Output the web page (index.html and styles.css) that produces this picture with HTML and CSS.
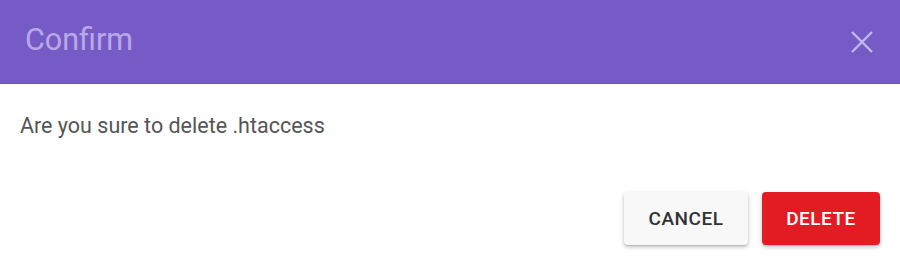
FILE: index.html
```html
<!DOCTYPE html>
<html>
<head>
<meta charset="utf-8">
<link rel="stylesheet" href="styles.css">
</head>
<body>
<div class="dialog">
  <div class="header">
    <h1 class="title">Confirm</h1>
    <button class="close" aria-label="Close">
      <svg width="22" height="22" viewBox="0 0 22 22"><path d="M1 1 L21 21 M21 1 L1 21" stroke="currentColor" stroke-width="2.4" fill="none"/></svg>
    </button>
  </div>
  <div class="body">
    <p class="message">Are you sure to delete .htaccess</p>
  </div>
  <div class="actions">
    <button class="btn btn-cancel">CANCEL</button>
    <button class="btn btn-delete">DELETE</button>
  </div>
</div>
</body>
</html>
```
FILE: styles.css
```css
html, body {
  margin: 0;
  padding: 0;
  background: #ffffff;
  font-family: Roboto, "Liberation Sans", sans-serif;
}
.dialog {
  width: 900px;
  height: 264px;
  display: flex;
  flex-direction: column;
}
.header {
  height: 83px;
  background: #765bc7;
  border-bottom: 1px solid #6a50b8;
  display: flex;
  align-items: center;
  justify-content: space-between;
  padding: 0 27px 0 25px;
}
.title {
  margin: 0;
  font-weight: 400;
  font-size: 30.5px;
  color: #b8a9e6;
  padding-bottom: 4px;
}
.close {
  background: none;
  border: none;
  padding: 0;
  color: #c3b6ec;
  display: flex;
}
.body {
  padding: 0 20px;
}
.message {
  margin: 29px 0 0;
  font-size: 21.5px;
  line-height: 25px;
  color: #555555;
}
.actions {
  display: flex;
  justify-content: flex-end;
  gap: 14px;
  padding: 0 20px;
  margin-top: 54px;
}
.btn {
  height: 53px;
  border: none;
  border-radius: 4px;
  font-family: Roboto, "Liberation Sans", sans-serif;
  font-weight: 500;
  font-size: 19px;
  letter-spacing: 0.5px;
  box-shadow: 0 2px 4px rgba(0,0,0,0.25), 0 1px 1px rgba(0,0,0,0.1);
}
.btn-cancel {
  width: 124px;
  background: #f8f8f8;
  color: #333333;
}
.btn-delete {
  width: 118px;
  background: #e31b23;
  color: #ffffff;
}
```
